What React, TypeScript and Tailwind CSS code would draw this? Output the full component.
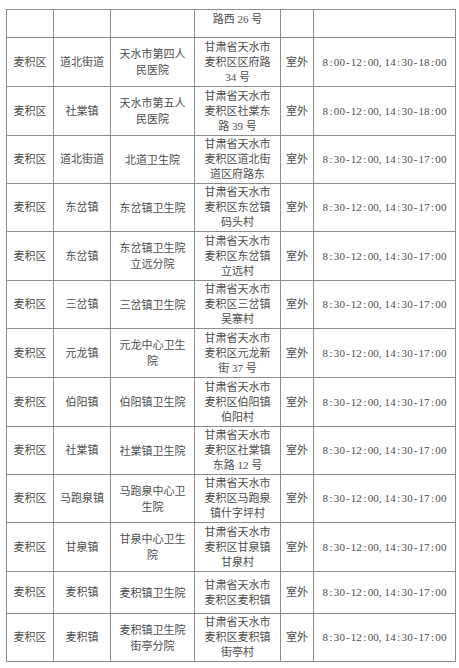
type Row = {
  h: string;
  district: string;
  town: string;
  site: string[];
  addr: string[];
  kind: string;
  hours: string;
};

const AM8 = "8:00-12:00,14:30-18:00";
const AM830 = "8:30-12:00,14:30-17:00";
const PROV = "甘肃省天水市";

const rows: Row[] = [
  { h: "h-[49px]", district: "麦积区", town: "道北街道", site: ["天水市第四人", "民医院"], addr: [PROV, "麦积区区府路", "34 号"], kind: "室外", hours: AM8 },
  { h: "h-[49px]", district: "麦积区", town: "社棠镇", site: ["天水市第五人", "民医院"], addr: [PROV, "麦积区社棠东", "路 39 号"], kind: "室外", hours: AM8 },
  { h: "h-[48px]", district: "麦积区", town: "道北街道", site: ["北道卫生院"], addr: [PROV, "麦积区道北街", "道区府路东"], kind: "室外", hours: AM830 },
  { h: "h-[48px]", district: "麦积区", town: "东岔镇", site: ["东岔镇卫生院"], addr: [PROV, "麦积区东岔镇", "码头村"], kind: "室外", hours: AM830 },
  { h: "h-[49px]", district: "麦积区", town: "东岔镇", site: ["东岔镇卫生院", "立远分院"], addr: [PROV, "麦积区东岔镇", "立远村"], kind: "室外", hours: AM830 },
  { h: "h-[48px]", district: "麦积区", town: "三岔镇", site: ["三岔镇卫生院"], addr: [PROV, "麦积区三岔镇", "吴寨村"], kind: "室外", hours: AM830 },
  { h: "h-[49px]", district: "麦积区", town: "元龙镇", site: ["元龙中心卫生", "院"], addr: [PROV, "麦积区元龙新", "街 37 号"], kind: "室外", hours: AM830 },
  { h: "h-[49px]", district: "麦积区", town: "伯阳镇", site: ["伯阳镇卫生院"], addr: [PROV, "麦积区伯阳镇", "伯阳村"], kind: "室外", hours: AM830 },
  { h: "h-[48px]", district: "麦积区", town: "社棠镇", site: ["社棠镇卫生院"], addr: [PROV, "麦积区社棠镇", "东路 12 号"], kind: "室外", hours: AM830 },
  { h: "h-[48px]", district: "麦积区", town: "马跑泉镇", site: ["马跑泉中心卫", "生院"], addr: [PROV, "麦积区马跑泉", "镇什字坪村"], kind: "室外", hours: AM830 },
  { h: "h-[49px]", district: "麦积区", town: "甘泉镇", site: ["甘泉中心卫生", "院"], addr: [PROV, "麦积区甘泉镇", "甘泉村"], kind: "室外", hours: AM830 },
  { h: "h-[42px]", district: "麦积区", town: "麦积镇", site: ["麦积镇卫生院"], addr: [PROV, "麦积区麦积镇"], kind: "室外", hours: AM830 },
  { h: "h-[48px]", district: "麦积区", town: "麦积镇", site: ["麦积镇卫生院", "街亭分院"], addr: [PROV, "麦积区麦积镇", "街亭村"], kind: "室外", hours: AM830 },
];

const cell = "border border-[#8c8c8c] p-0 text-center align-middle";

function Lines({ items, leading }: { items: string[]; leading: string }) {
  return (
    <div className={leading}>
      {items.map((t) => (
        <div key={t}>{t}</div>
      ))}
    </div>
  );
}

// half-width, evenly pitched like the Song-style font in the source document
function Hours({ text }: { text: string }) {
  return (
    <span className="inline-flex">
      {text.split("").map((ch, i) => (
        <span key={i} className={`inline-block w-[5.65px] ${ch === "," ? "text-left" : "text-center"}`}>
          {ch}
        </span>
      ))}
    </span>
  );
}

export default function App() {
  return (
    <div className="w-[459px] h-[668px] bg-white pl-[6px] pt-[9px] overflow-hidden [font-family:'Liberation_Serif','Noto_Sans_CJK_SC',serif] text-[11px] text-[#4d4d4d]">
      <table className="border-collapse table-fixed w-[449px]">
        <colgroup>
          <col className="w-[47px]" />
          <col className="w-[57px]" />
          <col className="w-[84px]" />
          <col className="w-[86px]" />
          <col className="w-[33px]" />
          <col className="w-[142px]" />
        </colgroup>
        <tbody>
          {/* continued row from previous page */}
          <tr className="h-[28px]">
            <td className={cell} />
            <td className={cell} />
            <td className={cell} />
            <td className={`${cell} !align-top pt-[2px] leading-[15px]`}>路西 26 号</td>
            <td className={cell} />
            <td className={cell} />
          </tr>

          {rows.map((r, i) => (
            <tr key={i} className={r.h}>
              <td className={cell}>{r.district}</td>
              <td className={cell}>{r.town}</td>
              <td className={cell}>
                <Lines items={r.site} leading="leading-[16px]" />
              </td>
              <td className={cell}>
                <Lines items={r.addr} leading="leading-[15px]" />
              </td>
              <td className={cell}>{r.kind}</td>
              <td className={cell}>
                <Hours text={r.hours} />
              </td>
            </tr>
          ))}
        </tbody>
      </table>
    </div>
  );
}
